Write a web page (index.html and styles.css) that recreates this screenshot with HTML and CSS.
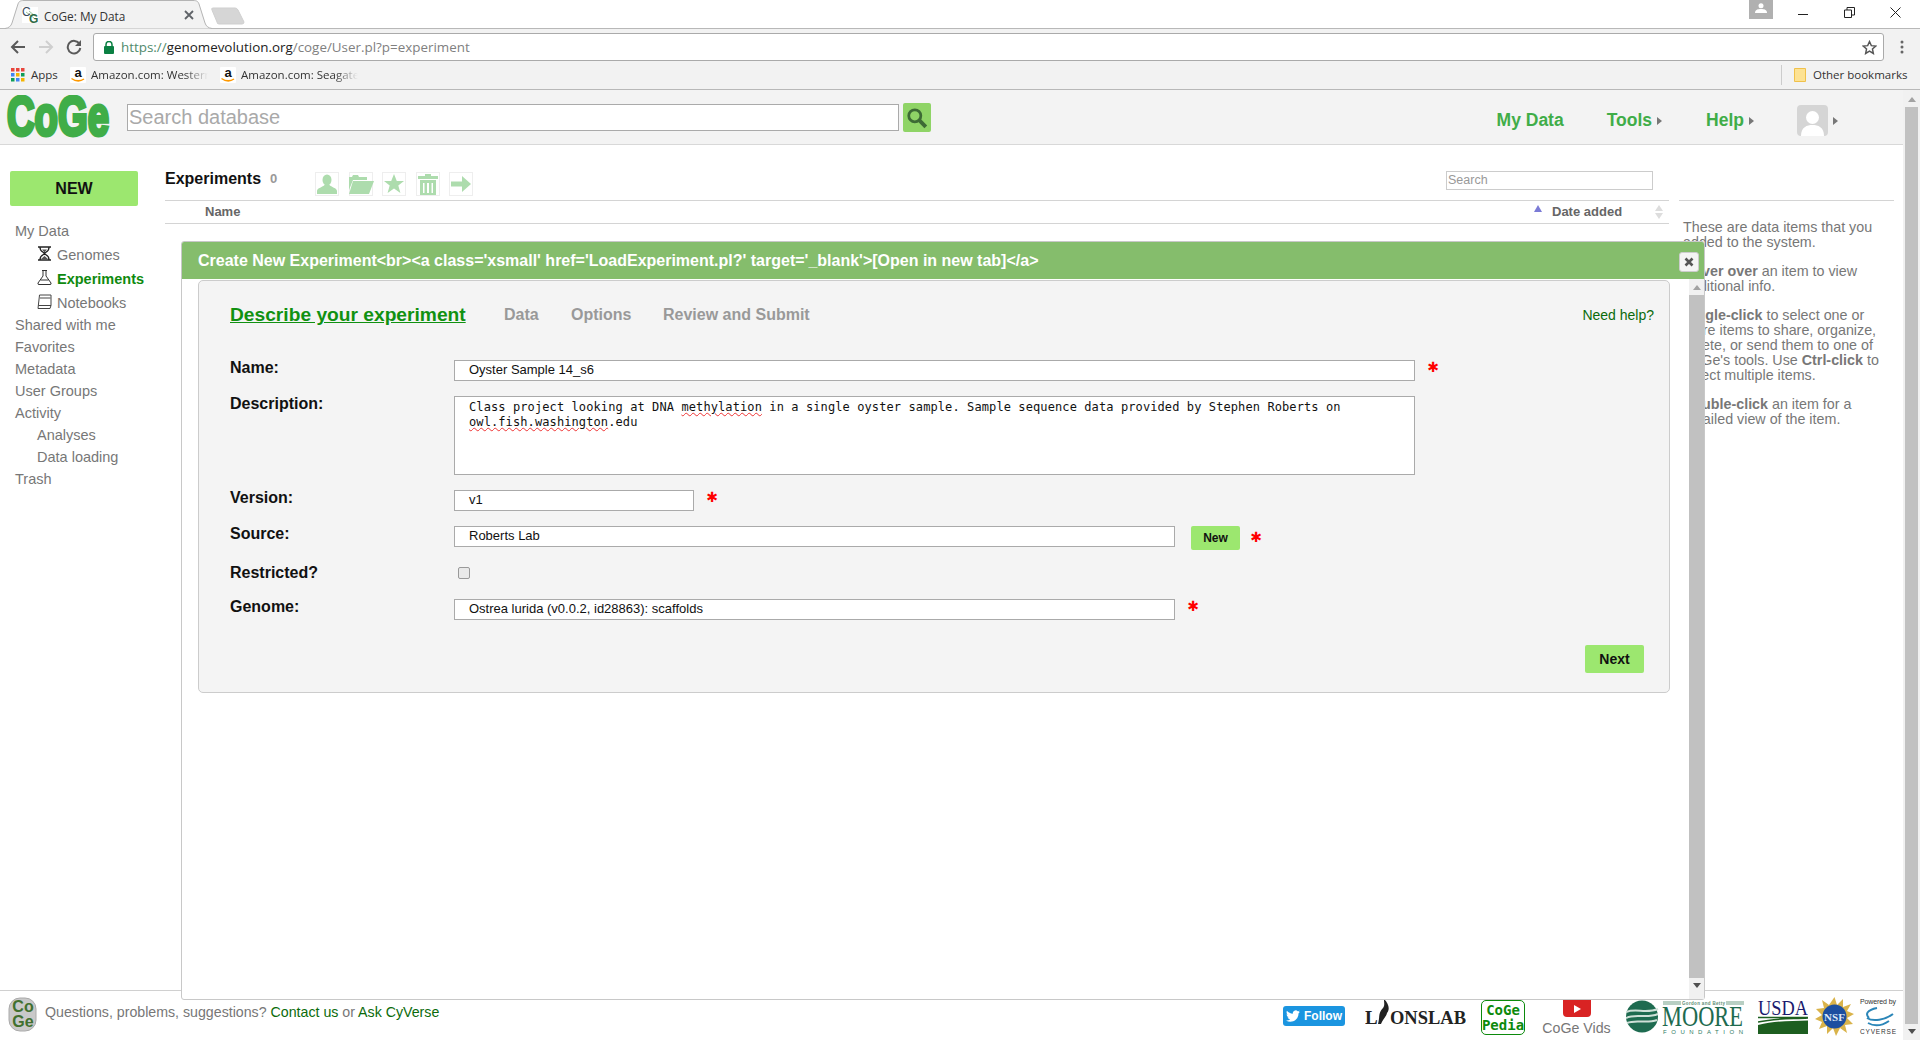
FILE: index.html
```html
<!DOCTYPE html>
<html lang="en">
<head>
<meta charset="utf-8">
<title>CoGe: My Data</title>
<link rel="stylesheet" href="styles.css">
</head>
<body>
<div class="browser">
  <div class="tabstrip">
    <div class="tab">
      <svg class="tab-shape" width="208" height="29" viewBox="0 0 208 29"><path class="tab-fill" d="M0 28.5 C4 28 6 26 7 23 L13 4 C14 1.500 15 .5 19 .5 H188 C192 .5 193 1.500 194 4 L200 23 C201 26 203 28 207 28.5"/></svg>
      <svg class="favicon" width="16" height="16" viewBox="0 0 16 16"><rect width="16" height="16" fill="#fff"/><path d="M4 5 L12 11 M7 4 L13 9" stroke="#9cc79c" stroke-width="1"/><text x="0" y="9" class="fav-c">C</text><text x="7" y="16" class="fav-g">G</text></svg>
      <span class="tab-title">CoGe: My Data</span>
      <svg class="tab-close" width="10" height="10" viewBox="0 0 10 10"><path d="M1 1 L9 9 M9 1 L1 9" stroke="#5f6368" stroke-width="1.800"/></svg>
    </div>
    <svg class="newtab" width="35" height="18" viewBox="0 0 35 18"><path d="M2 1 H24 Q26 1 27 3 L33 15 Q33 17 31 17 H8 Q6 17 6 15 L1 3 Q0 1 2 1Z" fill="#d6d6d6" stroke="#cfcfcf"/></svg>
    <div class="window-controls">
      <div class="profile"><svg width="12" height="10" viewBox="0 0 12 10"><circle cx="6" cy="2.800" r="2.500" fill="#fff"/><path d="M0 10 C0 6.500 3 6 6 6 C9 6 12 6.500 12 10Z" fill="#fff"/></svg></div>
      <svg class="win-btn" width="11" height="11" viewBox="0 0 11 11"><path d="M0 7.500 H10" stroke="#222" stroke-width="1"/></svg>
      <svg class="win-btn" width="11" height="11" viewBox="0 0 11 11"><path d="M.5 3 H7.500 V10.500 H.5Z M3 3 V.5 H10.500 V8 H7.500" fill="none" stroke="#222" stroke-width="1"/></svg>
      <svg class="win-btn" width="11" height="11" viewBox="0 0 11 11"><path d="M.5 .5 L10.500 10.500 M10.500 .5 L.5 10.500" stroke="#222" stroke-width="1"/></svg>
    </div>
  </div>
  <div class="toolbar">
    <svg class="nav-arrow" width="16" height="16" viewBox="0 0 16 16"><path d="M15 8 H2.500 M8 2 L2 8 L8 14" fill="none" stroke="#5a5a5a" stroke-width="2"/></svg>
    <svg class="nav-arrow" width="16" height="16" viewBox="0 0 16 16"><path d="M1 8 H13.500 M8 2 L14 8 L8 14" fill="none" stroke="#cfcfcf" stroke-width="2"/></svg>
    <svg class="nav-arrow" width="16" height="16" viewBox="0 0 16 16"><path d="M13.500 5 A6.300 6.300 0 1 0 14.300 9" fill="none" stroke="#5a5a5a" stroke-width="2"/><path d="M15 1 V7 H9Z" fill="#5a5a5a"/></svg>
    <div class="omnibox">
      <svg class="lock" width="10" height="13" viewBox="0 0 10 13"><path d="M2 6 V3.500 A3 3 0 0 1 8 3.500 V6" fill="none" stroke="#0b8043" stroke-width="1.500"/><rect y="5" width="10" height="8" rx="1" fill="#0b8043"/></svg>
      <span class="url"><span class="url-scheme">https://</span><span class="url-host">genomevolution.org</span>/coge/User.pl?p=experiment</span>
      <svg class="star-outline" width="15" height="15" viewBox="0 0 24 24"><path d="M12 2.500 L14.900 9 L22 9.700 L16.700 14.400 L18.200 21.500 L12 17.800 L5.800 21.500 L7.300 14.400 L2 9.700 L9.100 9Z" fill="none" stroke="#555" stroke-width="2.300"/></svg>
    </div>
    <svg class="menu-dots" width="4" height="14" viewBox="0 0 4 14"><circle cx="2" cy="2" r="1.500" fill="#666"/><circle cx="2" cy="7" r="1.500" fill="#666"/><circle cx="2" cy="12" r="1.500" fill="#666"/></svg>
  </div>
  <div class="bookmarks">
    <svg class="apps" width="14" height="14" viewBox="0 0 14 14"><rect width="3.500" height="3.500" fill="#e8453c"/><rect x="5" width="3.500" height="3.500" fill="#e8453c"/><rect x="10" width="3.500" height="3.500" fill="#e8453c"/><rect y="5" width="3.500" height="3.500" fill="#4285f4"/><rect x="5" y="5" width="3.500" height="3.500" fill="#f4b400"/><rect x="10" y="5" width="3.500" height="3.500" fill="#0f9d58"/><rect y="10" width="3.500" height="3.500" fill="#0f9d58"/><rect x="5" y="10" width="3.500" height="3.500" fill="#4285f4"/><rect x="10" y="10" width="3.500" height="3.500" fill="#f4b400"/></svg>
    <span class="bm-apps">Apps</span>
    <svg class="amazon" width="16" height="16" viewBox="0 0 16 16"><rect width="16" height="16" rx="1" fill="#fff"/><text x="8" y="10" class="amazon-a">a</text><path d="M1.500 11.500 Q8 16 14 12" fill="none" stroke="#f90" stroke-width="1.500"/></svg>
    <span class="bm-fade">Amazon.com: Western</span>
    <svg class="amazon amazon-2" width="16" height="16" viewBox="0 0 16 16"><rect width="16" height="16" rx="1" fill="#fff"/><text x="8" y="10" class="amazon-a">a</text><path d="M1.500 11.500 Q8 16 14 12" fill="none" stroke="#f90" stroke-width="1.500"/></svg>
    <span class="bm-fade">Amazon.com: Seagate</span>
    <div class="bm-other">
      <svg width="12" height="14" viewBox="0 0 12 14"><path d="M.5 .5 H11.500 V13.500 H.5Z" fill="#fde293" stroke="#f0c14b"/></svg>
      <span>Other bookmarks</span>
    </div>
  </div>
</div>

<div class="viewport">
  <div class="page">
    <header class="app-header">
      <svg class="logo" width="104" height="44" viewBox="0 0 104 44"><text x="1" y="40" class="logo-text" textLength="102" lengthAdjust="spacingAndGlyphs">CoGe</text></svg>
      <div class="search-input">Search database</div>
      <div class="search-btn"><svg width="22" height="22" viewBox="0 0 20 20"><circle cx="8" cy="8" r="5.500" fill="none" stroke="#3d6b35" stroke-width="2.500"/><path d="M12 12 L18 18" stroke="#3d6b35" stroke-width="3.500"/></svg></div>
      <nav class="top-nav">
        <a class="top-link">My Data</a>
        <a class="top-link top-tools">Tools</a><i class="caret"></i>
        <a class="top-link top-help">Help</a><i class="caret"></i>
        <svg class="avatar" width="31" height="31" viewBox="0 0 31 31"><rect width="31" height="31" rx="4" fill="#d5d5d5"/><circle cx="15.500" cy="12.500" r="6.500" fill="#fff"/><path d="M4 31 C4 22 10 20 15.500 20 C21 20 27 22 27 31Z" fill="#fff"/></svg><i class="caret caret-avatar"></i>
      </nav>
    </header>

    <main class="main">
      <aside class="sidebar">
        <div class="new-btn">NEW</div>
        <ul class="side-nav">
          <li class="side-item side-first">My Data</li>
          <li class="side-icon-row">
            <svg width="15" height="15" viewBox="0 0 15 15"><path d="M1 1 H14 M1 14 H14 M3 1.500 C3 6 7 6 7.500 7.500 C8 6 12 6 12 1.500 M3 13.500 C3 9 7 9 7.500 7.500 C8 9 12 9 12 13.500" fill="none" stroke="#222" stroke-width="1.300"/><path d="M5 3.500 H10 L7.500 6.500 Z M4 13 L7.500 10 L11 13Z" fill="#555"/></svg>
            <span>Genomes</span>
          </li>
          <li class="side-icon-row side-active">
            <svg width="15" height="15" viewBox="0 0 15 15"><path d="M5 .5 H10 M6 .5 V6 L1 13 Q.5 14.500 2 14.500 H13 Q14.500 14.500 14 13 L9 6 V.5 M3.500 10 H11.500" fill="none" stroke="#333" stroke-width="1"/></svg>
            <span>Experiments</span>
          </li>
          <li class="side-icon-row side-last">
            <svg width="15" height="15" viewBox="0 0 15 15"><path d="M1 14.500 L2.500 1 H14 V11.500 L13 14.500Z M1.500 11.500 H14 M3 4 H13.500" fill="none" stroke="#444" stroke-width="1"/></svg>
            <span>Notebooks</span>
          </li>
          <li class="side-item">Shared with me</li>
          <li class="side-item">Favorites</li>
          <li class="side-item">Metadata</li>
          <li class="side-item">User Groups</li>
          <li class="side-item">Activity</li>
          <li class="side-item side-sub">Analyses</li>
          <li class="side-item side-sub">Data loading</li>
          <li class="side-item">Trash</li>
        </ul>
      </aside>
      <section class="content">
        <div class="content-head">
          <span class="content-title">Experiments</span>
          <span class="content-count">0</span>
          <div class="actions">
            <div class="action"><svg width="20" height="20" viewBox="0 0 20 20"><ellipse cx="10" cy="6" rx="4.500" ry="5.500"/><path d="M0 20 V17 C0 14 6 13 7.500 11 H12.500 C14 13 20 14 20 17 V20Z"/></svg></div>
            <div class="action"><svg width="26" height="20" viewBox="0 0 26 20"><path d="M1 16 V3 H4 L5 1 H10 L11 3 H19 V6 H5Z"/><path d="M5 7 H26 L21 20 H1Z"/></svg></div>
            <div class="action"><svg width="20" height="20" viewBox="0 0 20 20"><path d="M10 0 L12.800 7 H20 L14.300 11.500 L16.400 19 L10 14.600 L3.600 19 L5.700 11.500 L0 7 H7.200Z"/></svg></div>
            <div class="action"><svg width="20" height="21" viewBox="0 0 20 21"><path d="M7 0 H13 V2 H20 V5 H0 V2 H7Z"/><path fill-rule="evenodd" d="M2 6 H18 V21 H2Z M5 9 V19 H6.500 V9Z M9 9 V19 H11 V9Z M13.500 9 V19 H15 V9Z"/></svg></div>
            <div class="action"><svg width="20" height="16" viewBox="0 0 20 16"><path d="M0 5.500 H11 V0 L20 8 L11 16 V10.500 H0Z"/></svg></div>
          </div>
          <div class="mini-search">Search</div>
        </div>
        <div class="table-head">
          <span class="th-name">Name</span>
          <i class="sort-up"></i>
          <span class="th-date">Date added</span>
          <span class="sort-both"><i></i><i></i></span>
        </div>
      </section>
      <aside class="help-panel">
        <p>These are data items that you added to the system.</p>
        <p><b>Hover over</b> an item to view additional info.</p>
        <p><b>Single-click</b> to select one or more items to share, organize, delete, or send them to one of CoGe's tools. Use <b>Ctrl-click</b> to select multiple items.</p>
        <p><b>Double-click</b> an item for a detailed view of the item.</p>
      </aside>
    </main>

    <footer class="footer">
      <svg class="foot-logo" width="30" height="35" viewBox="0 0 30 35"><rect x="1" y="1" width="27" height="33" rx="11" fill="#c9c9c9" stroke="#aaa"/><text x="15" y="15" class="foot-logo-text">Co</text><text x="15" y="30" class="foot-logo-text">Ge</text></svg>
      <span class="foot-text">Questions, problems, suggestions? <a class="foot-link">Contact us</a> or <a class="foot-link">Ask CyVerse</a></span>
      <div class="foot-logos">
        <div class="tw-btn"><svg width="14" height="12" viewBox="0 0 24 20"><path fill="#fff" d="M23.953 2.570a10 10 0 01-2.825.775 4.958 4.958 0 002.163-2.723c-.951.555-2.005.959-3.127 1.184a4.920 4.920 0 00-8.384 4.482C7.690 6.095 4.067 4.130 1.640 1.162a4.822 4.822 0 00-.666 2.475c0 1.710.870 3.213 2.188 4.096a4.904 4.904 0 01-2.228-.616v.060a4.923 4.923 0 003.946 4.827 4.996 4.996 0 01-2.212.085 4.936 4.936 0 004.604 3.417 9.867 9.867 0 01-6.102 2.105c-.390 0-.779-.023-1.170-.067a13.995 13.995 0 007.557 2.209c9.053 0 13.998-7.496 13.998-13.985 0-.210 0-.420-.015-.630A9.935 9.935 0 0024 2.590z"/></svg><span>Follow</span></div>
        <svg class="lyons" width="101" height="27" viewBox="0 0 101 27"><text x="0" y="25" class="lyons-text">L</text><path d="M13 25 C15 18 13 14 18 9 C20 6 19 4 19 0 C24 5 25 10 22 14 C21 18 18 20 16 25Z" fill="#222"/><text x="25" y="25" class="lyons-text" textLength="76" lengthAdjust="spacingAndGlyphs">ONSLAB</text></svg>
        <div class="pedia"><span>CoGe</span><span>Pedia</span></div>
        <div class="vids">
          <svg width="28" height="18" viewBox="0 0 28 18"><path d="M0 0 H28 V13 Q28 17 24 17 H4 Q0 17 0 13Z" fill="#d92323"/><path d="M11 5 L18 9 L11 13Z" fill="#fff"/></svg>
          <span>CoGe Vids</span>
        </div>
        <svg class="moore" width="118" height="34" viewBox="0 0 118 34"><circle cx="16" cy="16.500" r="16" fill="#1e6b50"/><path d="M0 12 C10 8 20 14 32 9 M0 18 C10 13 20 19 32 14 M1 23 C10 19 20 24 31 20" fill="none" stroke="#cfe0d8" stroke-width="2"/><rect x="37" y="1" width="18" height="4" fill="#b8cfc3"/><rect x="100" y="1" width="18" height="4" fill="#b8cfc3"/><text x="56" y="5" class="moore-small" textLength="43">Gordon and Betty</text><text x="36" y="26" class="moore-big" textLength="81" lengthAdjust="spacingAndGlyphs">MOORE</text><text x="37" y="33.500" class="moore-found" textLength="80">FOUNDATION</text></svg>
        <svg class="usda" width="50" height="36" viewBox="0 0 50 36"><text x="0" y="17" class="usda-text" textLength="50" lengthAdjust="spacingAndGlyphs">USDA</text><path d="M0 19.500 H50 M0 24 C18 20 32 21 50 20" fill="none" stroke="#1d5e20" stroke-width="1.500"/><path d="M0 27 C16 23 32 23 50 22.500 V36 H0Z" fill="#1d5e20"/></svg>
        <svg class="nsf" width="39" height="39" viewBox="0 0 39 39"><path d="M19.500 0 L22 8 L28 2 L28 10 L36 7 L32 14 L39 17 L32 21 L38 27 L30 28 L32 36 L25 31 L21 39 L18 31 L12 37 L12 29 L4 32 L7 25 L0 22 L7 18 L1 12 L9 11 L7 3 L14 8Z" fill="#d9b34a"/><circle cx="19.500" cy="19.500" r="12" fill="#1c4fa0"/><text x="19.500" y="23.500" class="nsf-text">NSF</text></svg>
        <svg class="cyverse" width="38" height="37" viewBox="0 0 38 37"><text x="19" y="6" class="cy-small" textLength="36">Powered by</text><path d="M18 10 C8 12 6 16 10 20 M8 20 C14 24 26 22 34 16 M9 25 C16 29 24 27 30 23" fill="none" stroke="#2b86b8" stroke-width="2"/><text x="19" y="36" class="cy-big" textLength="36">CYVERSE</text></svg>
      </div>
    </footer>
  </div>
  <div class="page-scroll">
    <i class="arrow-up"></i>
    <div class="page-thumb"></div>
    <i class="arrow-down"></i>
  </div>
</div>

<div class="dialog">
  <div class="dialog-title">
    <span>Create New Experiment&lt;br&gt;&lt;a class='xsmall' href='LoadExperiment.pl?' target='_blank'&gt;[Open in new tab]&lt;/a&gt;</span>
    <div class="dialog-close"><svg width="10" height="10" viewBox="0 0 10 10"><path d="M1.500 1.500 L8.500 8.500 M8.500 1.500 L1.500 8.500" stroke="#555" stroke-width="2.600"/></svg></div>
  </div>
  <div class="dialog-body">
    <div class="card">
      <div class="steps">
        <a class="step-current">Describe your experiment</a>
        <span class="step step-data">Data</span>
        <span class="step step-options">Options</span>
        <span class="step step-review">Review and Submit</span>
        <a class="need-help">Need help?</a>
      </div>
      <form class="form">
        <div class="row"><label class="lbl">Name:</label><div class="field w-full">Oyster Sample 14_s6</div><span class="req">✱</span></div>
        <div class="row"><label class="lbl">Description:</label><div class="area">Class project looking at DNA <span class="typo">methylation</span> in a single oyster sample. Sample sequence data provided by Stephen Roberts on<br><span class="typo">owl.fish.washington</span>.edu</div></div>
        <div class="row"><label class="lbl">Version:</label><div class="field w-ver">v1</div><span class="req">✱</span></div>
        <div class="row"><label class="lbl">Source:</label><div class="field w-mid">Roberts Lab</div><div class="btn-new">New</div><span class="req req-src">✱</span></div>
        <div class="row row-check"><label class="lbl">Restricted?</label><span class="check"></span></div>
        <div class="row"><label class="lbl">Genome:</label><div class="field w-mid">Ostrea lurida (v0.0.2, id28863): scaffolds</div><span class="req">✱</span></div>
        <div class="form-end"><div class="btn-next">Next</div></div>
      </form>
    </div>
    <div class="dlg-scroll">
      <i class="arrow-up"></i>
      <div class="dlg-thumb"></div>
      <i class="arrow-down"></i>
    </div>
  </div>
</div>
</body>
</html>
```

FILE: styles.css
```css
* { box-sizing: border-box; }
html, body { margin: 0; padding: 0; height: 1040px; overflow: hidden; background: #fff; }
body { font-family: "Liberation Sans", Arial, sans-serif; font-size: 14.500px; color: #777; position: relative; }
p { margin: 0; }
ul { margin: 0; padding: 0; list-style: none; }
a { text-decoration: none; }

/* browser chrome */
.browser { height: 90px; font-family: "Open Sans", "Noto Sans", sans-serif; }
.tabstrip { height: 29px; display: flex; align-items: flex-start; position: relative; border-bottom: 1px solid #b8b8b8; background: #fff; }
.tab { position: relative; width: 208px; height: 29px; margin-left: 5px; display: flex; align-items: center; padding-left: 17px; z-index: 1; }
.tab-shape { position: absolute; left: 0; top: 0; }
.tab-fill { fill: #f2f2f2; stroke: #b4b4b4; stroke-width: 1; }
.favicon { position: relative; margin-right: 6px; margin-top: 1px; }
.fav-c, .fav-g { font-family: "Liberation Sans", sans-serif; font-size: 12px; }
.fav-c { fill: #3a4a5a; }
.fav-g { fill: #2f6b45; font-weight: 700; }
.tab-title { position: relative; font-size: 11.800px; color: #333; width: 100px; white-space: nowrap; margin-top: 2px; }
.tab-close { position: relative; margin-left: 40px; }
.newtab { margin-left: -2px; margin-top: 7px; }
.window-controls { margin-left: auto; display: flex; align-items: flex-start; }
.profile { width: 24px; height: 19px; background: #b0b0b0; display: flex; justify-content: center; padding-top: 3px; margin-right: 25px; }
.win-btn { margin-top: 7px; margin-right: 35px; }
.win-btn:last-child { margin-right: 19px; }
.toolbar { height: 33px; background: #f2f2f2; display: flex; align-items: center; padding: 3px 0 0 10px; }
.nav-arrow { margin-right: 12px; }
.nav-arrow:nth-child(3) { margin-right: 11px; }
.omnibox { width: 1791px; height: 28px; background: #fff; border: 1px solid #aaa; border-radius: 3px; display: flex; align-items: center; padding-left: 10px; }
.lock { margin-right: 7px; }
.url { font-size: 13.400px; color: #808080; white-space: nowrap; font-family: "Open Sans", sans-serif; }
.url-scheme { color: #4f8a6b; }
.url-host { color: #222; }
.star-outline { margin-left: auto; margin-right: 6px; }
.menu-dots { margin-left: 16px; }
.bookmarks { height: 28px; background: #f2f2f2; border-bottom: 1px solid #b8b8b8; display: flex; align-items: center; padding: 0 0 2px 11px; font-size: 11.500px; color: #333; }
.apps { margin-right: 6px; }
.bm-apps { width: 39px; }
.amazon { margin-right: 5px; }
.amazon-a { font: 700 13px "Liberation Sans", sans-serif; text-anchor: middle; fill: #111; }
.amazon-2 { margin-left: 12px; }
.bm-fade { width: 117px; overflow: hidden; white-space: nowrap; -webkit-mask-image: linear-gradient(to right, #000 80%, transparent); mask-image: linear-gradient(to right, #000 80%, transparent); }
.bm-other { margin-left: auto; display: flex; align-items: center; height: 20px; border-left: 1px solid #ccc; padding-left: 12px; width: 139px; gap: 7px; }

/* page */
.viewport { display: flex; height: 950px; }
.page { width: 1903px; display: flex; flex-direction: column; }
.app-header { height: 55px; flex: none; background: #f3f3f3; border-bottom: 1px solid #d8d8d8; display: flex; align-items: flex-start; padding-left: 6px; position: relative; }
.logo { margin-top: 5px; flex: none; }
.logo-text { font: 700 56px "Liberation Sans", sans-serif; fill: #40ad48; stroke: #40ad48; stroke-width: 4px; }
.search-input { width: 772px; height: 27px; margin-left: 17px; margin-top: 14px; background: #fff; border: 1px solid #aaa; font-size: 20px; line-height: 25px; padding-left: 1px; color: #a9a9a9; }
.search-btn { width: 28px; height: 29px; margin-left: 4px; margin-top: 13px; background: #8fd466; display: flex; align-items: center; justify-content: center; border-radius: 2px; }
.top-nav { margin-left: auto; display: flex; align-items: center; height: 31px; margin-top: 15px; padding-right: 65px; }
.top-link { font-size: 17.500px; font-weight: 700; color: #40ad48; white-space: nowrap; }
.top-tools { margin-left: 43px; }
.top-help { margin-left: 44px; }
.caret { width: 0; height: 0; border-left: 5px solid #777; border-top: 4px solid transparent; border-bottom: 4px solid transparent; margin-left: 5px; }
.avatar { margin-left: 43px; }

.main { flex: 1; display: flex; min-height: 0; }
.sidebar { width: 165px; flex: none; padding: 26px 0 0 10px; }
.new-btn { width: 128px; height: 35px; background: #9ce76f; border-radius: 2px; color: #111; font-size: 16px; font-weight: 700; display: flex; align-items: center; justify-content: center; }
.side-nav { margin-top: 14px; margin-left: 5px; }
.side-item { height: 22px; line-height: 22px; }
.side-first { margin-bottom: 1px; }
.side-sub { padding-left: 22px; }
.side-icon-row { height: 24px; display: flex; align-items: center; padding-left: 22px; }
.side-icon-row svg { margin-right: 5px; margin-top: -3px; flex: none; }
.side-last { height: 23px; }
.side-active { color: #0f8a0f; font-weight: 700; }

.content { width: 1504px; flex: none; }
.content-head { height: 56px; border-bottom: 1px solid #d4d4d4; display: flex; align-items: flex-start; }
.content-title { font-size: 16px; font-weight: 700; color: #111; margin-top: 25px; line-height: 18px; width: 105px; }
.content-count { font-size: 13px; font-weight: 700; color: #999; margin-top: 27px; line-height: 14px; width: 45px; }
.actions { display: flex; gap: 9.500px; margin-top: 27px; }
.action { width: 24px; height: 24px; border: 1px solid #eee; display: flex; align-items: center; justify-content: center; fill: #addcad; }
.action svg { flex: none; }
.mini-search { margin-left: auto; margin-right: 16px; margin-top: 26px; width: 207px; height: 19px; border: 1px solid #ccc; font-size: 12.500px; line-height: 17px; color: #999; padding-left: 1px; }
.table-head { height: 23px; border-bottom: 1px solid #d4d4d4; display: flex; align-items: center; padding-bottom: 2px; font-size: 13px; font-weight: 700; color: #666; position: relative; }
.th-name { margin-left: 40px; }
.sort-up { width: 0; height: 0; border-left: 4px solid transparent; border-right: 4px solid transparent; border-bottom: 7px solid #7b7bd6; margin-left: auto; margin-top: -5px; }
.th-date { margin-left: 10px; width: 103px; }
.sort-both { display: flex; flex-direction: column; gap: 2px; margin-right: 6px; margin-top: 2px; }
.sort-both i { width: 0; height: 0; border-left: 4px solid transparent; border-right: 4px solid transparent; border-bottom: 6px solid #ddd; }
.sort-both i + i { border-bottom: 0; border-top: 6px solid #ddd; }
.help-panel { width: 215px; margin-left: 10px; border-top: 1px solid #d4d4d4; margin-top: 55px; padding: 19px 0 0 4px; font-size: 14.300px; line-height: 15px; height: 300px; flex: none; }
.help-panel p { width: 204px; margin-bottom: 14px; }

.footer { height: 50px; flex: none; border-top: 1px solid #d0d0d0; display: flex; align-items: flex-start; padding-left: 8px; }
.foot-logo { margin-top: 6px; flex: none; }
.foot-logo-text { font: 700 16px "Liberation Sans", sans-serif; fill: #41702f; text-anchor: middle; }
.foot-text { margin-left: 7px; margin-top: 13px; line-height: 16px; white-space: nowrap; font-size: 14.200px; }
.foot-link { color: #0b6b0b; }
.foot-logos { margin-left: auto; display: flex; align-items: flex-start; padding-right: 6px; }
.tw-btn { width: 62px; height: 20px; background: #1b95e0; border-radius: 3px; margin-top: 15px; display: flex; align-items: center; justify-content: center; gap: 4px; color: #fff; font-size: 12px; font-weight: 700; }
.lyons { margin-left: 20px; margin-top: 8px; }
.lyons-text { font: 700 19px "Liberation Serif", serif; fill: #222; }
.pedia { width: 44px; height: 35px; margin-left: 15px; margin-top: 9px; border: 1px solid #0c8a0c; border-radius: 5px; display: flex; flex-direction: column; align-items: center; justify-content: center; font: 700 14px/15px "DejaVu Sans Mono", monospace; color: #0c8a0c; }
.vids { margin-left: 18px; margin-top: 9px; width: 67px; display: flex; flex-direction: column; align-items: center; font-size: 14.200px; line-height: 16px; white-space: nowrap; }
.vids svg { display: block; margin-bottom: 2px; }
.moore { margin-left: 16px; margin-top: 9px; }
.moore-small { font: 700 4.500px "Liberation Sans", sans-serif; fill: #5f8f78; }
.moore-big { font: 400 29px "Liberation Serif", serif; fill: #1e6b50; }
.moore-found { font: 400 6px "Liberation Sans", sans-serif; fill: #2f7a5f; }
.usda { margin-left: 14px; margin-top: 7px; }
.usda-text { font: 400 21px "Liberation Serif", serif; fill: #1a1a6e; }
.nsf { margin-left: 7px; margin-top: 6px; }
.nsf-text { font: 700 11px "Liberation Serif", serif; fill: #dfe7f5; text-anchor: middle; }
.cyverse { margin-left: 5px; margin-top: 7px; }
.cy-small { font: 400 7px "Liberation Sans", sans-serif; fill: #333; text-anchor: middle; }
.cy-big { font: 400 6.500px "Liberation Sans", sans-serif; fill: #333; text-anchor: middle; }

.page-scroll { width: 17px; background: #f1f1f1; display: flex; flex-direction: column; align-items: center; padding-top: 7px; }
.page-thumb { width: 13px; height: 917px; margin-top: 5px; background: #c1c1c1; }
.arrow-up, .arrow-down { flex: none; width: 0; height: 0; border-left: 4px solid transparent; border-right: 4px solid transparent; }
.arrow-up { border-bottom: 5px solid #a3a3a3; }
.arrow-down { border-top: 5px solid #505050; margin-top: 5px; }

/* modal dialog */
.dialog { position: absolute; left: 181px; top: 241px; width: 1524px; height: 759px; background: #fff; border: 1px solid #c8c8c8; border-radius: 3px; display: flex; flex-direction: column; }
.dialog-title { height: 37px; flex: none; background: #85bd6c; color: #fff; font-size: 16px; font-weight: 700; display: flex; align-items: center; padding-left: 16px; position: relative; border-radius: 2px 2px 0 0; white-space: nowrap; }
.dialog-close { position: absolute; right: 5px; top: 10px; width: 20px; height: 20px; background: #f4f4f4; border: 1px solid #ccc; border-radius: 3px; display: flex; align-items: center; justify-content: center; }
.dialog-body { flex: 1; display: flex; align-items: flex-start; padding-left: 16px; min-height: 0; }
.card { width: 1472px; height: 413px; background: #f4f4f4; border: 1px solid #ccc; border-radius: 5px; padding: 22px 25px 0 31px; margin-top: 1px; flex: none; }
.steps { height: 24px; display: flex; align-items: center; white-space: nowrap; }
.step-current { font-size: 19.200px; font-weight: 700; color: #119111; text-decoration: underline; width: 274px; }
.step { font-size: 16px; font-weight: 700; color: #999; }
.step-data { width: 67px; }
.step-options { width: 92px; }
.need-help { margin-left: auto; margin-right: -10px; color: #0b6b0b; font-size: 14px; }
.form { margin-top: 33px; }
.row { display: flex; align-items: flex-start; margin-bottom: 15px; }
.lbl { width: 224px; flex: none; font-size: 16px; line-height: 16px; font-weight: 700; color: #111; }
.field { height: 21px; background: #fff; border: 1px solid #aaa; font-size: 13px; line-height: 18px; color: #111; padding-left: 14px; white-space: nowrap; flex: none; }
.w-full { width: 961px; }
.w-ver { width: 240px; }
.w-mid { width: 721px; }
.area { width: 961px; height: 79px; background: #fff; border: 1px solid #aaa; padding: 3px 14px; font: 12px/15px "DejaVu Sans Mono", monospace; letter-spacing: .1px; color: #111; white-space: nowrap; }
.typo { text-decoration: underline wavy #e33; text-decoration-thickness: 1px; text-underline-offset: 1px; }
.req { color: #f00; font: 700 14px/14px "DejaVu Sans", sans-serif; margin-left: 12px; width: 12px; text-align: center; }
.req-src { margin-left: 10px; margin-top: 4px; }
.btn-new { width: 49px; height: 24px; margin-left: 16px; background: #9ce76f; border-radius: 2px; color: #111; font-size: 12px; font-weight: 700; display: flex; align-items: center; justify-content: center; }
.row-check { height: 19px; }
.check { width: 12px; height: 12px; margin-left: 4px; margin-top: 2px; background: #e9e9e9; border: 1px solid #999; border-radius: 2px; }
.form-end { display: flex; justify-content: flex-end; margin-top: 25px; }
.btn-next { width: 59px; height: 28px; background: #9ce76f; border-radius: 2px; color: #111; font-size: 14px; font-weight: 700; display: flex; align-items: center; justify-content: center; }
.dlg-scroll { margin-left: auto; width: 15px; height: 720px; background: #f1f1f1; display: flex; flex-direction: column; align-items: center; padding-top: 6px; }
.dlg-thumb { width: 15px; height: 683px; margin-top: 5px; background: #c1c1c1; flex: none; }
```
